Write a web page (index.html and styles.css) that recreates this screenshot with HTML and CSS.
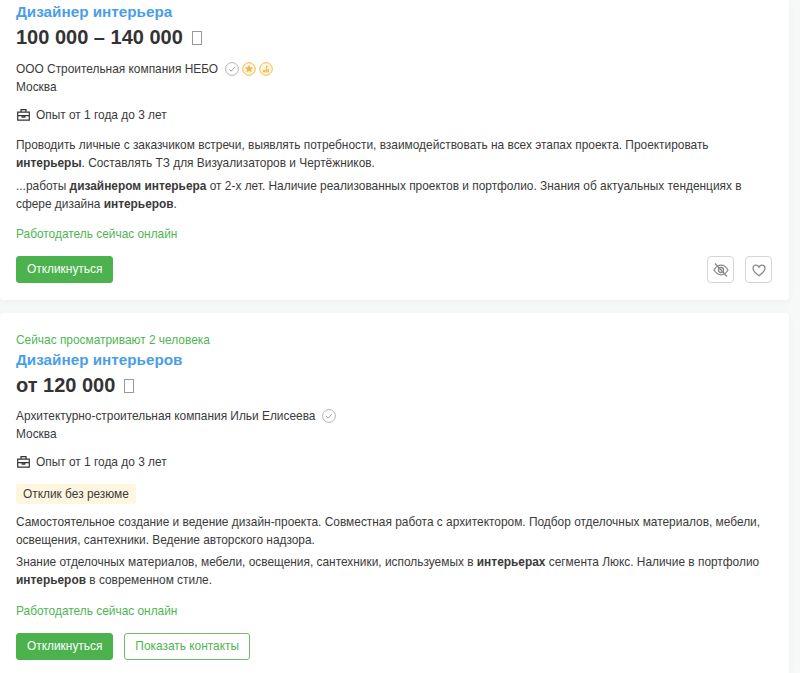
FILE: index.html
```html
<!DOCTYPE html>
<html lang="ru">
<head>
  <meta charset="UTF-8">
  <meta name="viewport" content="width=device-width, initial-scale=1.0">
  <title>Вакансии</title>
  <link rel="stylesheet" href="styles.css">
</head>
<body>
  <div class="vacancy-list">

    <div class="vacancy-card first">
      <a class="vacancy-title" href="#">Дизайнер интерьера</a>
      <div class="salary">100 000 – 140 000<span class="currency"></span></div>
      <div class="company">
        <span>ООО Строительная компания НЕБО</span>
        <svg class="badge first-badge" viewBox="0 0 14 14"><circle cx="7" cy="7" r="6.400" fill="none" stroke="#b4b4b4"/><path d="M4.200 7.200l2 2 3.600-4" fill="none" stroke="#a0a0a0"/></svg>
        <svg class="badge" viewBox="0 0 14 14"><circle cx="7" cy="7" r="6.300" fill="#fff6e2" stroke="#f5b84a"/><path d="M7 2.800l1.200 2.500 2.800.3-2 1.900.5 2.800L7 9.100l-2.500 1.200.5-2.800-2-1.900 2.800-.3z" fill="#f5b84a"/></svg>
        <svg class="badge" viewBox="0 0 14 14"><circle cx="7" cy="7" r="6.300" fill="#fff6e2" stroke="#f5b84a"/><path d="M4 8h2v2.500h-2zM6.500 6.500h1.500v4h-1.500zM7 3.500h1.500v2.500h-1.500zM8.500 7h1.500v3.500h-1.500z" fill="#f5b84a"/></svg>
      </div>
      <div class="city">Москва</div>
      <div class="experience">
        <svg class="case-icon" viewBox="0 0 13 12"><path d="M.7 3.200h11.600v8h-11.600zM.7 6.600h11.600M4 3.200v-2.500h5v2.500M5.200 6.600v1.500h2.600v-1.500" fill="none" stroke="#333" stroke-width="1.200"/></svg>
        <span>Опыт от 1 года до 3 лет</span>
      </div>
      <p class="snippet">Проводить личные с заказчиком встречи, выявлять потребности, взаимодействовать на всех этапах проекта. Проектировать <b>интерьеры</b>. Составлять ТЗ для Визуализаторов и Чертёжников.</p>
      <p class="snippet next">...работы <b>дизайнером интерьера</b> от 2-х лет. Наличие реализованных проектов и портфолио. Знания об актуальных тенденциях в сфере дизайна <b>интерьеров</b>.</p>
      <div class="online">Работодатель сейчас онлайн</div>
      <div class="actions">
        <a class="btn btn-primary" href="#">Откликнуться</a>
        <div class="icon-buttons">
          <a class="icon-btn" href="#"><svg viewBox="0 0 18 18"><path d="M2 9c2-3.300 4.500-4.800 7-4.800s5 1.500 7 4.800c-2 3.300-4.500 4.800-7 4.800s-5-1.500-7-4.800z" fill="none" stroke="#8a8a8a" stroke-width="1.300"/><circle cx="9" cy="9" r="2.500" fill="none" stroke="#8a8a8a" stroke-width="1.300"/><path d="M3 2.500l12 13" stroke="#8a8a8a" stroke-width="1.300"/></svg></a>
          <a class="icon-btn" href="#"><svg viewBox="0 0 18 18"><path d="M9 14.800c-4-2.900-6-5-6-7.500 0-1.900 1.400-3.100 3-3.100 1.300 0 2.400.7 3 1.900.6-1.200 1.700-1.900 3-1.900 1.600 0 3 1.200 3 3.100 0 2.500-2 4.600-6 7.500z" fill="none" stroke="#8a8a8a" stroke-width="1.300"/></svg></a>
        </div>
      </div>
    </div>

    <div class="vacancy-card second">
      <div class="viewers">Сейчас просматривают 2 человека</div>
      <a class="vacancy-title" href="#">Дизайнер интерьеров</a>
      <div class="salary">от 120 000<span class="currency"></span></div>
      <div class="company">
        <span>Архитектурно-строительная компания Ильи Елисеева</span>
        <svg class="badge first-badge" viewBox="0 0 14 14"><circle cx="7" cy="7" r="6.400" fill="none" stroke="#b4b4b4"/><path d="M4.200 7.200l2 2 3.600-4" fill="none" stroke="#a0a0a0"/></svg>
      </div>
      <div class="city">Москва</div>
      <div class="experience">
        <svg class="case-icon" viewBox="0 0 13 12"><path d="M.7 3.200h11.600v8h-11.600zM.7 6.600h11.600M4 3.200v-2.500h5v2.500M5.200 6.600v1.500h2.600v-1.500" fill="none" stroke="#333" stroke-width="1.200"/></svg>
        <span>Опыт от 1 года до 3 лет</span>
      </div>
      <div class="label">Отклик без резюме</div>
      <p class="snippet after-label">Самостоятельное создание и ведение дизайн-проекта. Совместная работа с архитектором. Подбор отделочных материалов, мебели, освещения, сантехники. Ведение авторского надзора.</p>
      <p class="snippet next tight">Знание отделочных материалов, мебели, освещения, сантехники, используемых в <b>интерьерах</b> сегмента Люкс. Наличие в портфолио <b>интерьеров</b> в современном стиле.</p>
      <div class="online">Работодатель сейчас онлайн</div>
      <div class="actions">
        <a class="btn btn-primary" href="#">Откликнуться</a>
        <a class="btn btn-outline" href="#">Показать контакты</a>
      </div>
    </div>

  </div>
</body>
</html>
```

FILE: styles.css
```css
* {
  margin: 0;
  padding: 0;
  box-sizing: border-box;
}

body {
  background-color: #f7f8f8;
  font-family: 'Liberation Sans', Arial, sans-serif;
  font-size: 11.9px;
  line-height: 18px;
  color: #3a3a3a;
  height: 673px;
  overflow: hidden;
}

.vacancy-list {
  width: 789px;
  display: flex;
  flex-direction: column;
  gap: 13px;
}

/* Card */
.vacancy-card {
  background-color: #fff;
  padding: 0 17px 0 16px;
  border-radius: 0 0 4px 4px;
  box-shadow: 0 2px 8px rgba(0, 0, 0, 0.04);
}

.vacancy-card.first {
  height: 300px;
  padding-top: 2px;
}

.vacancy-card.second {
  height: 360px;
  padding-top: 18px;
  border-radius: 4px 4px 0 0;
}

.viewers {
  color: #4fb553;
  margin-bottom: 1px;
}

.vacancy-title {
  display: block;
  font-size: 15.25px;
  font-weight: bold;
  line-height: 20px;
  color: #4a9ee8;
  text-decoration: none;
}

.salary {
  font-size: 20px;
  font-weight: bold;
  line-height: 30px;
  margin-bottom: 8px;
  color: #333;
}

.second .salary {
  margin-bottom: 7px;
}

/* the missing ruble glyph shows as an empty box */
.currency {
  display: inline-block;
  width: 10px;
  height: 14px;
  margin-left: 9px;
  border: 1px solid #999;
  vertical-align: -1px;
}

/* Company */
.company {
  display: flex;
  align-items: center;
  height: 18px;
}

.badge {
  width: 14px;
  height: 14px;
  margin-left: 3px;
}

.first-badge {
  margin-left: 7px;
}

.experience {
  display: flex;
  align-items: center;
  gap: 6px;
  margin-top: 9px;
  height: 20px;
}

.case-icon {
  width: 13px;
  height: 12px;
  margin-left: 1px;
}

.label {
  display: table;
  background-color: #fff6e0;
  border-radius: 3px;
  padding: 0 7px;
  line-height: 20px;
  margin-top: 12px;
}

.snippet {
  margin-top: 12px;
  line-height: 17.5px;
}

.snippet.next {
  margin-top: 6px;
}

.snippet.tight {
  margin-top: 5px;
}

.snippet.after-label {
  margin-top: 10px;
}

.online {
  color: #4fb553;
  margin-top: 12px;
}

.second .online {
  margin-top: 13px;
}

/* Buttons */
.actions {
  display: flex;
  align-items: center;
  gap: 11px;
  margin-top: 13px;
}

.btn {
  display: block;
  height: 27px;
  line-height: 25px;
  padding: 0 10px;
  border: 1px solid #4bb24e;
  border-radius: 3px;
  text-decoration: none;
}

.btn-primary {
  background-color: #4bb24e;
  color: #fff;
}

.btn-outline {
  background-color: #fff;
  border-color: #6dbd70;
  color: #4fb553;
}

.icon-buttons {
  display: flex;
  gap: 11px;
  margin-left: auto;
}

.icon-btn {
  display: flex;
  align-items: center;
  justify-content: center;
  width: 27px;
  height: 27px;
  border: 1px solid #d5d5d5;
  border-radius: 4px;
}

.icon-btn svg {
  width: 18px;
  height: 18px;
}
```
